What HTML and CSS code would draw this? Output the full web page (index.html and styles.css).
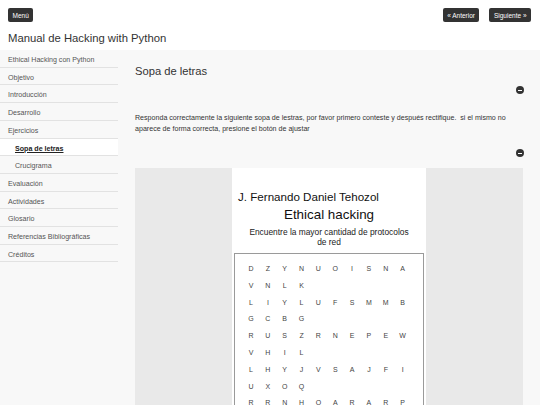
FILE: index.html
```html
<!DOCTYPE html>
<html lang="es">
<head>
    <meta charset="UTF-8">
    <meta name="viewport" content="width=device-width, initial-scale=1.0">
    <title>Manual de Hacking with Python</title>
    <link rel="stylesheet" href="styles.css">
</head>
<body>
    <header class="topbar">
        <div class="topbar-buttons">
            <button class="btn">Menú</button>
            <div class="pager">
                <button class="btn">&laquo; Anterior</button>
                <button class="btn">Siguiente &raquo;</button>
            </div>
        </div>
        <h1 class="site-title">Manual de Hacking with Python</h1>
    </header>

    <div class="layout">
        <nav class="sidebar">
            <ul>
                <li><a href="#">Ethical Hacking con Python</a></li>
                <li><a href="#">Objetivo</a></li>
                <li><a href="#">Introducción</a></li>
                <li><a href="#">Desarrollo</a></li>
                <li><a href="#">Ejercicios</a></li>
                <li class="sub active"><a href="#">Sopa de letras</a></li>
                <li class="sub"><a href="#">Crucigrama</a></li>
                <li><a href="#">Evaluación</a></li>
                <li><a href="#">Actividades</a></li>
                <li><a href="#">Glosario</a></li>
                <li><a href="#">Referencias Bibliográficas</a></li>
                <li><a href="#">Créditos</a></li>
            </ul>
        </nav>

        <main class="content">
            <h2 class="page-title">Sopa de letras</h2>
            <div class="toggle-row"><span class="collapse-icon"></span></div>
            <p class="intro">Responda correctamente la siguiente sopa de lestras, por favor primero conteste y después rectifique.&nbsp; si el mismo no aparece de forma correcta, presione el botón de ajustar</p>
            <div class="toggle-row second"><span class="collapse-icon"></span></div>

            <div class="viewer">
                <div class="paper">
                    <div class="author">J. Fernando Daniel Tehozol</div>
                    <div class="puzzle-title">Ethical hacking</div>
                    <div class="puzzle-desc">Encuentre la mayor cantidad de protocolos de red</div>
                    <div class="grid-box" id="gridBox"></div>
                </div>
            </div>
        </main>
    </div>

    <script>
        // filas de la sopa de letras (14 letras por fila)
        const rows = [
            'DZYNUOISNAVNLK',
            'LIYLUFSMMBGCBG',
            'RUSZRNEPEWVHIL',
            'LHYJVSAJFIUXOQ',
            'RRNHOARARPTCPS',
            'QWERTYUIOPASDF'
        ];
        const box = document.getElementById('gridBox');
        rows.forEach(function(row) {
            const div = document.createElement('div');
            div.className = 'grid-row';
            row.split('').forEach(function(ch) {
                const cell = document.createElement('span');
                cell.className = 'cell';
                cell.textContent = ch;
                div.appendChild(cell);
            });
            box.appendChild(div);
        });
    </script>
</body>
</html>
```

FILE: styles.css
```css
body {
    margin: 0;
    font-family: "Liberation Sans", Arial, sans-serif;
    color: #333;
    background-color: #f8f8f8;
}

.topbar {
    background-color: #fff;
    height: 50px;
    padding: 8px 9px 0 8px;
    box-sizing: border-box;
}

.topbar-buttons {
    display: flex;
    justify-content: space-between;
}

.pager {
    display: flex;
    gap: 10px;
}

.btn {
    background-color: #333;
    color: #fff;
    border: none;
    border-radius: 2px;
    font-family: inherit;
    font-size: 6.5px;
    height: 14px;
    padding: 0 4.5px;
    cursor: pointer;
}

.site-title {
    margin: 9.5px 0 0 0;
    font-size: 11.3px;
    line-height: 13px;
    font-weight: normal;
}

.layout {
    display: flex;
}

.sidebar {
    width: 118px;
    flex-shrink: 0;
}

.sidebar ul {
    list-style-type: none;
    margin: 0;
    padding: 0;
}

.sidebar li {
    border-bottom: 1px solid #e2e2e2;
}

.sidebar li a {
    display: block;
    padding: 4px 0 0 8px;
    font-size: 7.1px;
    line-height: 12.7px;
    color: #555;
    text-decoration: none;
    white-space: nowrap;
}

.sidebar li.sub a {
    padding-left: 15px;
}

.sidebar li.active {
    background-color: #fff;
}

.sidebar li.active a {
    color: #222;
    font-weight: bold;
    text-decoration: underline;
}

.content {
    flex: 1;
    padding: 14px 17px 0 17px;
}

.page-title {
    margin: 0;
    font-size: 11.2px;
    line-height: 14px;
    font-weight: normal;
}

.toggle-row {
    display: flex;
    justify-content: flex-end;
    margin-top: 8px;
}

.toggle-row.second {
    margin-top: 14.5px;
}

.collapse-icon {
    position: relative;
    width: 8px;
    height: 8px;
    border-radius: 50%;
    background-color: #333;
    margin-right: -1px;
}

.collapse-icon::after {
    content: "";
    position: absolute;
    left: 2px;
    top: 3.5px;
    width: 4px;
    height: 1.2px;
    background-color: #fff;
}

.intro {
    margin: 18.5px 0 0 0;
    font-size: 7.1px;
    line-height: 11px;
    color: #333;
}

.viewer {
    margin-top: 11px;
    background-color: #e9e9e9;
    display: flex;
    justify-content: center;
    height: 260px;
}

.paper {
    width: 194px;
    background-color: #fff;
    padding-top: 22px;
    box-sizing: border-box;
    color: #111;
}

.author {
    padding-left: 6px;
    font-size: 11.6px;
    line-height: 14px;
}

.puzzle-title {
    margin-top: 3px;
    text-align: center;
    font-size: 13.4px;
    line-height: 16px;
}

.puzzle-desc {
    width: 170px;
    margin: 4px auto 0 auto;
    text-align: center;
    font-size: 8.4px;
    line-height: 10px;
    color: #222;
}

.grid-box {
    margin: 5.5px 0 0 2px;
    width: 190px;
    border: 1px solid #9a9a9a;
    box-sizing: border-box;
    padding: 7.6px 0 0 7.6px;
}

.grid-row {
    display: flex;
    flex-wrap: wrap;
    width: 168.5px;
}

.cell {
    width: 16.85px;
    height: 16.8px;
    line-height: 16.8px;
    text-align: center;
    font-size: 7px;
    color: #444;
}
```
